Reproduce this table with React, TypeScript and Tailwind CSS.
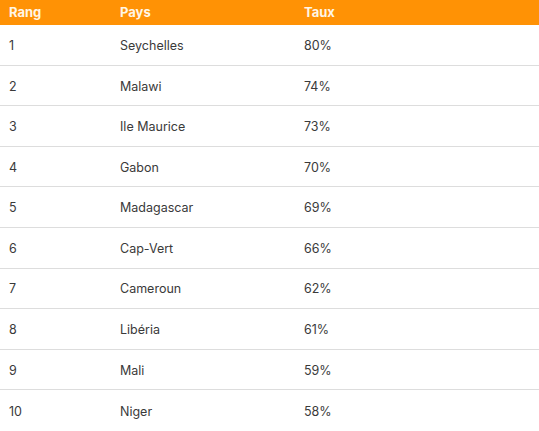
import React from 'react';

const rows: [number, string, string][] = [
  [1, 'Seychelles', '80%'],
  [2, 'Malawi', '74%'],
  [3, 'Ile Maurice', '73%'],
  [4, 'Gabon', '70%'],
  [5, 'Madagascar', '69%'],
  [6, 'Cap-Vert', '66%'],
  [7, 'Cameroun', '62%'],
  [8, 'Libéria', '61%'],
  [9, 'Mali', '59%'],
  [10, 'Niger', '58%'],
];

export default function App() {
  return (
    <div className="w-[539px] h-[431px] bg-white font-['Inter',sans-serif] overflow-hidden">
      <div className="grid grid-cols-[111px_184px_1fr] h-[25px] items-center bg-[#ff9205] text-[13px] font-bold text-[#fff6e6]">
        <div className="pl-[9px]">Rang</div>
        <div className="pl-[9px]">Pays</div>
        <div className="pl-[9px]">Taux</div>
      </div>
      {rows.map(([rank, country, rate], i) => (
        <div
          key={rank}
          className={`grid grid-cols-[111px_184px_1fr] h-[40.6px] pt-[3px] items-center text-[12.5px] text-[#3a3a3a] ${
            i < rows.length - 1 ? 'border-b border-[#dddddd]' : ''
          }`}
        >
          <div className="pl-[9px]">{rank}</div>
          <div className="pl-[9px]">{country}</div>
          <div className="pl-[9px]">{rate}</div>
        </div>
      ))}
    </div>
  );
}
